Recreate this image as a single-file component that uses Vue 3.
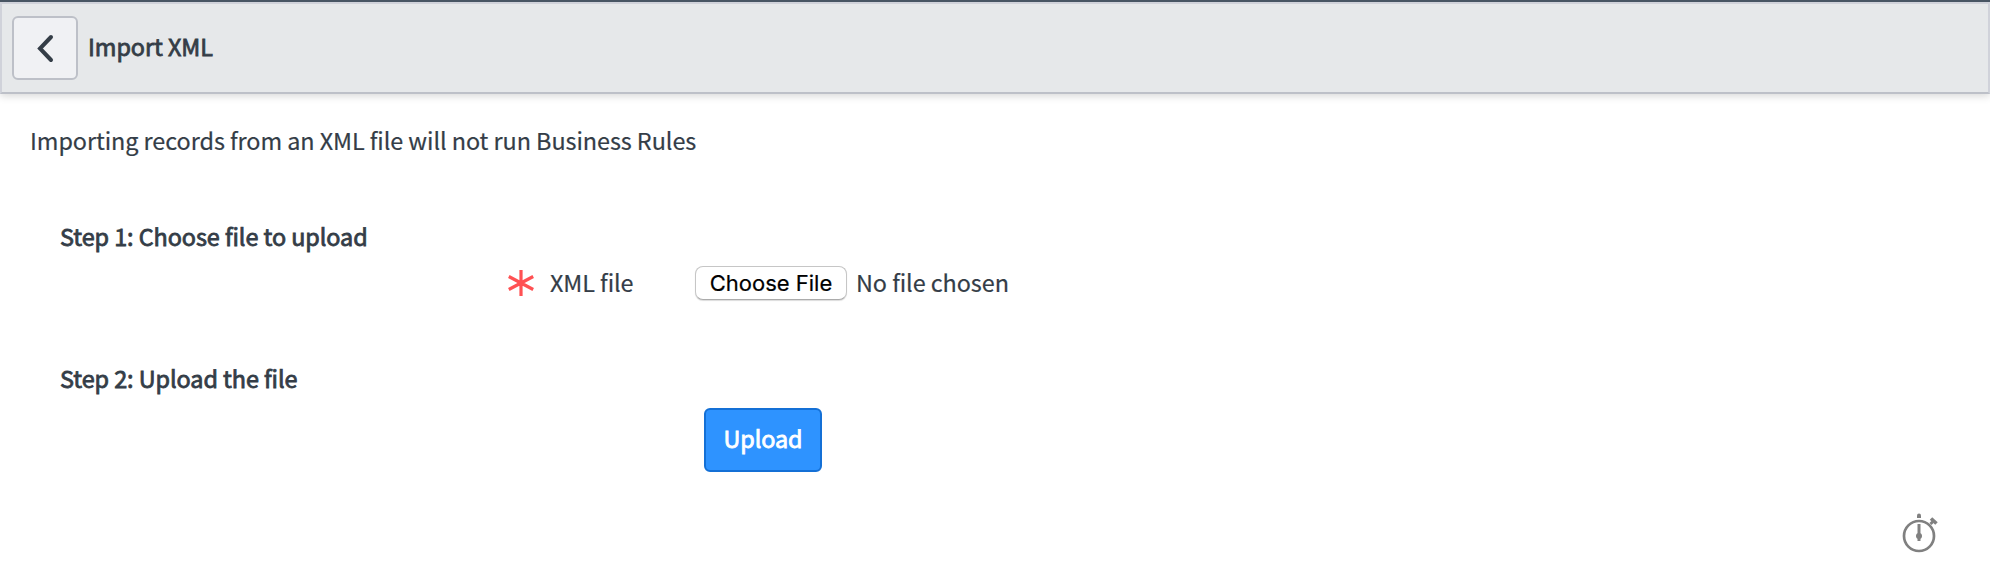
<script setup>
const message = 'Importing records from an XML file will not run Business Rules'
</script>

<template>
  <main class="page">
    <header class="bar">
      <button class="back" aria-label="Back">
        <svg width="62" height="60" viewBox="0 0 62 60">
          <path d="M37 19 L26 30.5 L37 42" fill="none" stroke="#343d47" stroke-width="4" stroke-linecap="round" />
        </svg>
      </button>
      <h1 class="title"><span>Import XML</span></h1>
    </header>
    <p class="message"><span>{{ message }}</span></p>
    <h2 class="step first"><span>Step 1: Choose file to upload</span></h2>
    <div class="file-row">
      <svg class="required" width="28" height="28" viewBox="0 0 28 28">
        <path d="M14 2V28M1.8 8.5L26.2 21.5M1.8 21.5L26.2 8.5" stroke="#ff5153" stroke-width="3.2" />
      </svg>
      <label class="label"><span>XML file</span></label>
      <button class="choose"><span>Choose File</span></button>
      <div class="chosen"><span>No file chosen</span></div>
    </div>
    <h2 class="step second"><span>Step 2: Upload the file</span></h2>
    <button class="upload"><span>Upload</span></button>
    <svg class="timer" width="40" height="44" viewBox="0 0 40 44">
      <g fill="none" stroke="#808080">
        <circle cx="19" cy="26" r="15" stroke-width="2.7" />
        <path d="M19 14V31" stroke-width="3" />
        <path d="M31 8.5L36.5 13.5" stroke-width="3.6" />
        <path d="M33 11.5L30.5 14" stroke-width="3" />
      </g>
      <path d="M17 8V5.5Q17 3.5 19 3.5T21 5.5V8Z" fill="#808080" />
      <circle cx="19" cy="26" r="3" fill="#808080" />
    </svg>
  </main>
</template>

<style>
body { margin: 0; background: #fff; }
</style>

<style scoped>
* { box-sizing: border-box; }
.page {
  height: 574px;
  overflow: hidden;
  display: flex;
  flex-direction: column;
  align-items: flex-start;
  color: #343d47;
  background: #fff;
  font: 400 23.4px/36px "Noto Sans CJK SC", "Noto Sans", sans-serif;
  letter-spacing: -.06px;
  -webkit-text-stroke: .2px;
  border-top: 2px solid #485563;
  white-space: nowrap;
}
button { font: inherit; letter-spacing: inherit; padding: 0; margin: 0; }
h1, h2, p { margin: 0; font: inherit; }
.bar {
  width: 100%;
  height: 92px;
  flex: none;
  display: flex;
  align-items: flex-start;
  background: #e6e8ea;
  border: 2px solid #d0d2da;
  border-bottom-color: #bdc0c8;
  box-shadow: 0 2px 8px rgba(0, 0, 0, .16);
  padding: 12px 10px;
}
.back {
  width: 66px;
  height: 64px;
  border: 2px solid #bdc0c8;
  border-radius: 6px;
  background: #f0f1f4;
}
.back svg { display: block; }
.title { margin: 12px 0 0 10px; -webkit-text-stroke: .8px; }
.message { margin: 28px 0 0 30px; }
.step { margin-left: 60px; -webkit-text-stroke: .8px; }
.first { margin-top: 60px; }
.file-row { display: flex; align-items: center; height: 36px; margin: 11px 0 0 507px; }
.required { margin-bottom: 2px; }
.label { width: 132px; margin: -2px 0 0 15px; }
.choose {
  width: 152px;
  height: 34px;
  border: 1px solid #c6c6c6;
  border-bottom-color: #ababab;
  border-radius: 8px;
  background: #fff;
  color: #000;
  box-shadow: 0 1px 1px rgba(0, 0, 0, .14);
  font: 22px/32px Inter, "Liberation Sans", sans-serif;
  letter-spacing: 0;
  margin-left: 13px;
}
.chosen { margin: -2px 0 0 9px; }
.second { margin-top: 59px; }
.upload {
  width: 118px;
  height: 64px;
  margin: 12px 0 0 704px;
  padding-bottom: 4px;
  border: 2px solid #1470d6;
  border-radius: 6px;
  background: #2e93ff;
  color: #fff;
  -webkit-text-stroke: .8px;
}
.timer { margin: 38px 0 0 1900px; flex: none; }
</style>
